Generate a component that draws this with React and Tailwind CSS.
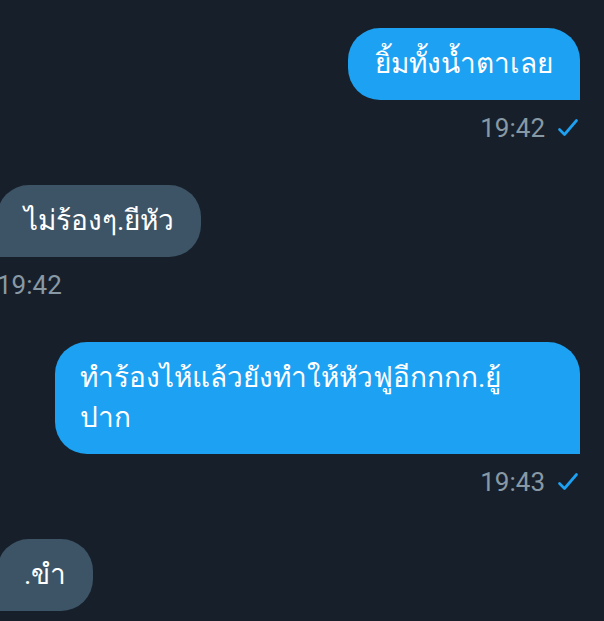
import React from "react";

const messages = [
  { side: "right", lines: ["ยิ้มทั้งน้ำตาเลย"], time: "19:42" },
  { side: "left", lines: ["ไม่ร้องๆ.ยีหัว"], time: "19:42" },
  { side: "right", lines: ["ทำร้องไห้แล้วยังทำให้หัวฟูอีกกกก.ยู้", "ปาก"], time: "19:43", wide: true },
  { side: "left", lines: [".ขำ"] },
];

const Check = () => (
  <svg width="24" height="24" viewBox="0 0 24 24" fill="none" className="ml-[11px]">
    <path d="M3.5 13.5l5 5L20.5 4.5" stroke="#1da1f2" strokeWidth="2.7" strokeLinecap="round" strokeLinejoin="round" />
  </svg>
);

const Bubble = ({ m }) => {
  const right = m.side === "right";
  return (
    <div className={`flex flex-col ${right ? "items-end pr-[24px]" : "items-start -ml-[3px]"}`}>
      <div
        className={`px-[27px] py-[16px] text-[28px] leading-[40px] text-white rounded-[32px] ${
          right ? "bg-[#1da1f2] rounded-br-none" : "bg-[#3d5466] rounded-bl-none"
        } ${m.wide ? "w-[525px] pl-[25px]" : ""}`}
      >
        {m.lines.map((l, i) => (
          <div key={i}>{l}</div>
        ))}
      </div>
      {m.time && (
        <div className="flex items-center mt-[13px] text-[26px] leading-[30px] text-[#8899a6]">
          <span>{m.time}</span>
          {right && <Check />}
        </div>
      )}
    </div>
  );
};

export default function App() {
  return (
    <div
      className="w-[604px] h-[621px] overflow-hidden bg-[#17202a] pt-[28px] flex flex-col gap-[42px]"
      style={{ fontFamily: "Roboto, 'Noto Sans', sans-serif" }}
    >
      {messages.map((m, i) => (
        <Bubble key={i} m={m} />
      ))}
    </div>
  );
}
